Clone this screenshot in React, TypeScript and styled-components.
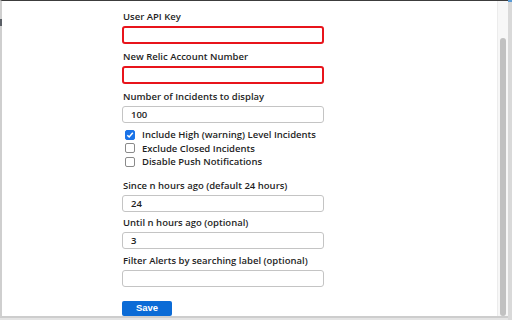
import React from "react";
import styled, { createGlobalStyle } from "styled-components";

const Global = createGlobalStyle`
  html, body { margin: 0; padding: 0; background: #ffffff; }
  body { font-family: "Open Sans", "Liberation Sans", sans-serif; }
  * { box-sizing: border-box; }
`;

const Screen = styled.div`
  width: 512px;
  height: 320px;
  display: flex;
  overflow: hidden;
  background: #e4e4e4;
`;

const Popup = styled.div`
  width: 508px;
  height: 318px;
  display: flex;
  border-top: 1px solid #3c3c3c;
  border-left: 2px solid #cfcfcf;
  border-bottom: 2px solid #cdcdcd;
  background: #ffffff;
  position: relative;
`;

const LeftTab = styled.div`
  position: absolute;
  left: -2px;
  top: 18px;
  width: 2px;
  height: 7px;
  background: #5a5f66;
`;

const Content = styled.div`
  flex: 1;
  padding: 11px 0 0 120px;
  display: flex;
  flex-direction: column;
  overflow: hidden;
`;

const Field = styled.div<{ $gap: number }>`
  display: flex;
  flex-direction: column;
  margin-top: ${(p) => p.$gap}px;
`;

const Label = styled.label`
  font-size: 9.5px;
  line-height: 10px;
  font-weight: 600;
  color: #1f1f1f;
  margin-left: 1px;
  margin-bottom: 4px;
  white-space: nowrap;
`;

const Input = styled.div<{ $error?: boolean }>`
  width: 202px;
  height: ${(p) => (p.$error ? 18 : 17)}px;
  border: ${(p) => (p.$error ? "2px solid #e8141b" : "1px solid #c4c4c4")};
  border-radius: 3px;
  background: #fff;
  font-size: 9.5px;
  font-weight: 600;
  color: #222;
  display: flex;
  align-items: center;
  padding-left: 8px;
`;

const Checks = styled.div`
  display: flex;
  flex-direction: column;
  margin-top: 5px;
  margin-left: 3px;
`;

const CheckRow = styled.div`
  height: 13.5px;
  display: flex;
  align-items: center;
  gap: 7px;
  font-size: 9.5px;
  font-weight: 600;
  color: #1f1f1f;
  white-space: nowrap;
`;

const Box = styled.span<{ $on?: boolean }>`
  width: 10px;
  height: 10px;
  border-radius: 2px;
  border: 1px solid ${(p) => (p.$on ? "#1a73e8" : "#8a8a8a")};
  background: ${(p) => (p.$on ? "#1a73e8" : "#fff")};
  display: flex;
  align-items: center;
  justify-content: center;
`;

const SaveButton = styled.button`
  margin-top: 14px;
  width: 50px;
  height: 18px;
  border: none;
  border-radius: 2px;
  background: #0b6bd6;
  color: #fff;
  font-family: "Liberation Sans", Arial, sans-serif;
  font-size: 9.5px;
  font-weight: 700;
  padding: 0 0 2px 0;
  align-self: flex-start;
`;

const ScrollTrack = styled.div`
  width: 11px;
  height: 100%;
  background: #f7f7f7;
  border-left: 1px solid #ececec;
  padding: 37px 1px 0 2px;
`;

const Thumb = styled.div`
  width: 6px;
  height: 278px;
  border-radius: 3px;
  background: #c1c1c1;
`;

const RightEdge = styled.div`
  width: 4px;
  height: 320px;
  background: #d9d9d9;
  border-top: 2px solid #5b9bd5;
`;

const Check = () => (
  <svg width="8" height="8" viewBox="0 0 8 8">
    <path d="M1.3 4.2 L3.2 6 L6.8 1.8" stroke="#fff" strokeWidth="1.5" fill="none" />
  </svg>
);

export default function App() {
  return (
    <>
      <Global />
      <Screen>
        <Popup>
          <LeftTab />
          <Content>
            <Field $gap={0}>
              <Label>User API Key</Label>
              <Input $error />
            </Field>
            <Field $gap={8}>
              <Label>New Relic Account Number</Label>
              <Input $error />
            </Field>
            <Field $gap={8}>
              <Label>Number of Incidents to display</Label>
              <Input>100</Input>
            </Field>
            <Checks>
              <CheckRow>
                <Box $on>
                  <Check />
                </Box>
                Include High (warning) Level Incidents
              </CheckRow>
              <CheckRow>
                <Box />
                Exclude Closed Incidents
              </CheckRow>
              <CheckRow>
                <Box />
                Disable Push Notifications
              </CheckRow>
            </Checks>
            <Field $gap={12}>
              <Label>Since n hours ago (default 24 hours)</Label>
              <Input>24</Input>
            </Field>
            <Field $gap={6}>
              <Label>Until n hours ago (optional)</Label>
              <Input>3</Input>
            </Field>
            <Field $gap={7}>
              <Label>Filter Alerts by searching label (optional)</Label>
              <Input />
            </Field>
            <SaveButton>Save</SaveButton>
          </Content>
          <ScrollTrack>
            <Thumb />
          </ScrollTrack>
        </Popup>
        <RightEdge />
      </Screen>
    </>
  );
}
